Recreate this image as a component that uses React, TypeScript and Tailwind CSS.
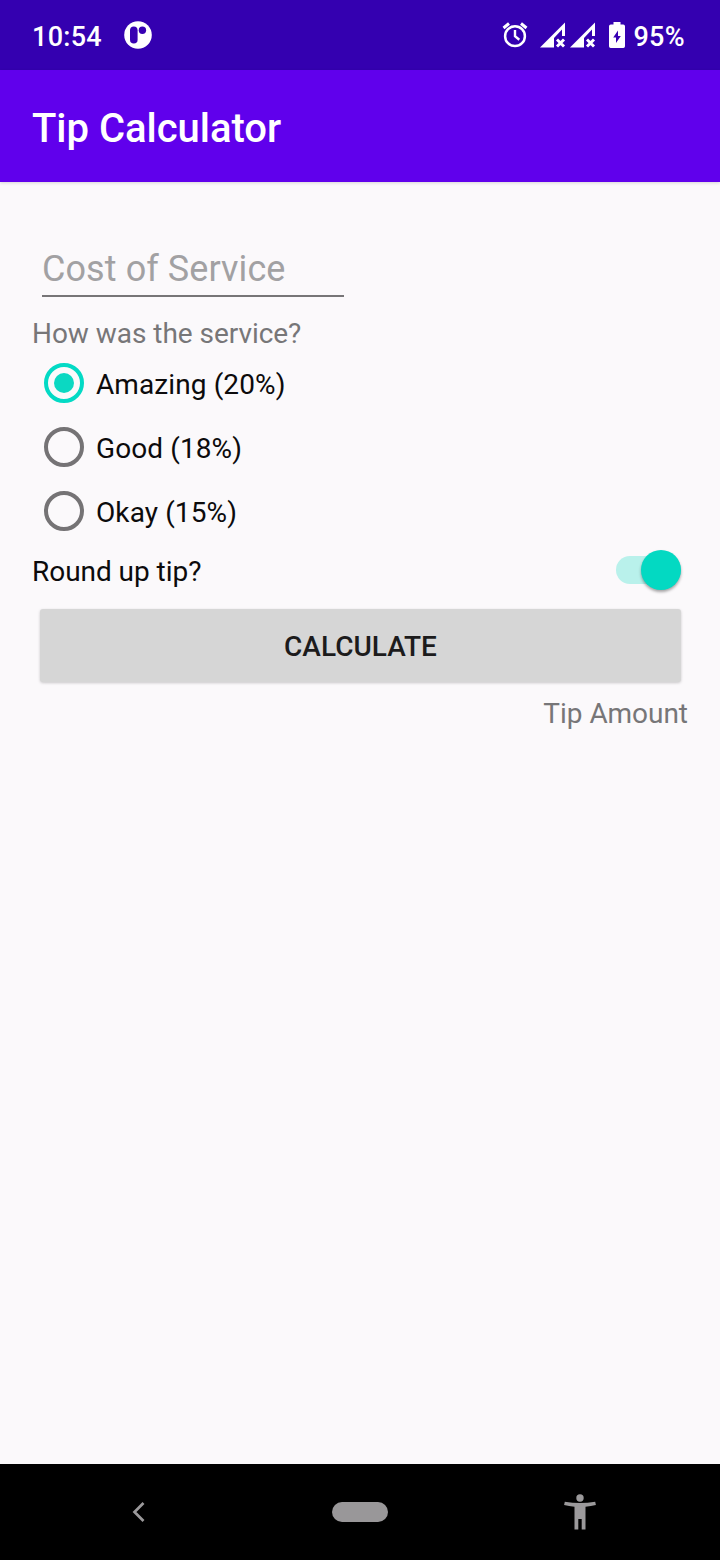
import { useState } from "react";

function NotificationIcon() {
  return (
    <svg className="block h-7 w-7" viewBox="0 0 28 28">
      <circle cx="14" cy="14" r="13.8" fill="#fff" />
      <rect x="6" y="5.5" width="7.6" height="17" rx="3.8" fill="#3700b3" />
      <circle cx="18.4" cy="9.2" r="3.7" fill="#3700b3" />
    </svg>
  );
}

function AlarmIcon() {
  return (
    <svg className="block h-[26px] w-[26px]" viewBox="0 0 26 26" fill="none" stroke="#fff">
      <circle cx="13" cy="14.2" r="9.9" strokeWidth="2.5" />
      <path d="M13 8v6.300l4.300 3.500" strokeWidth="2.400" />
      <path d="M1.500 6 7 1.500M24.500 6 19 1.500" strokeWidth="3" />
    </svg>
  );
}

function SignalIcon() {
  return (
    <svg className="block h-[26px] w-[26px]" viewBox="0 0 26 26">
      <path d="M0 25.500 25 .5v13.500h-3V7.500L14 16V25.500Z" fill="#fff" />
      <path d="m17 17.500 7 7m0-7-7 7" stroke="#fff" strokeWidth="2.900" />
    </svg>
  );
}

function BatteryIcon() {
  return (
    <svg className="block h-[26px] w-4" viewBox="0 0 16 26">
      <path d="M4.500 0h7v2.500h2.700Q16 2.500 16 4.300v20Q16 26 14.300 26H1.700Q0 26 0 24.300v-20Q0 2.500 1.800 2.500h2.700Z" fill="#fff" />
      <path d="M9 8.500 4.200 15.500H7V21l4.800-7H9Z" fill="#3700b3" />
    </svg>
  );
}

const options = ["Amazing (20%)", "Good (18%)", "Okay (15%)"];

export default function App() {
  const [selected, setSelected] = useState(0);
  const [roundUp, setRoundUp] = useState(true);

  return (
    <div className="flex h-[1560px] w-[720px] flex-col bg-[#fbf9fb] font-['Roboto',sans-serif] text-[28px] leading-[37px] tracking-[-0.04px]">
      <div className="flex h-[70px] shrink-0 items-center bg-[#3400b0] pb-px pl-8 pr-[35px] text-[27px] font-medium text-white">
        <span className="w-[92px] pt-[5px] tracking-[0.3px]">10:54</span>
        <NotificationIcon />
        <div className="ml-auto flex items-center pt-px">
          <AlarmIcon />
          <div className="ml-3 flex gap-1">
            <SignalIcon />
            <SignalIcon />
          </div>
          <div className="ml-[13px]">
            <BatteryIcon />
          </div>
          <span className="ml-2 pt-1 tracking-[0.35px]">95%</span>
        </div>
      </div>

      <header className="flex h-28 shrink-0 items-center bg-[#6000ec] px-8 pt-[6px] shadow-[0_1px_3px_rgba(0,0,0,0.15)]">
        <h1 className="text-[40px] font-medium leading-[52px] tracking-[-0.02px] text-white">Tip Calculator</h1>
      </header>

      <main className="flex flex-1 flex-col px-8">
        <input
          aria-label="Cost of Service"
          placeholder="Cost of Service"
          className="ml-[10px] mt-[62px] h-[53px] w-[302px] border-b-2 border-[#777577] bg-transparent pb-px text-[36px] tracking-[0.08px] text-black outline-none placeholder:text-[#a2a1a3]"
        />
        <p className="mt-[18px] text-[#777678]">How was the service?</p>

        <div className="-mt-px flex flex-col">
          {options.map((label, i) => (
            <button key={label} className="flex h-16 items-center pl-3" onClick={() => setSelected(i)}>
              <span
                className={
                  i === selected
                    ? "flex h-10 w-10 items-center justify-center rounded-full border-4 border-[#03dac5]"
                    : "flex h-10 w-10 items-center justify-center rounded-full border-4 border-[#757375]"
                }
              >
                {i === selected && <span className="h-5 w-5 rounded-full bg-[#0bd8c2]" />}
              </span>
              <span className="ml-3 pt-[2px] tracking-[0.1px] text-[#0c0b0c]">{label}</span>
            </button>
          ))}
        </div>

        <div className="flex h-[54px] items-center justify-between pr-[7px]">
          <span className="pt-[3px] text-[#0c0b0c]">Round up tip?</span>
          <button
            role="switch"
            aria-checked={roundUp}
            aria-label="Round up tip?"
            onClick={() => setRoundUp(!roundUp)}
            className={
              roundUp
                ? "flex h-7 w-[65px] items-center justify-end rounded-full bg-[#b9f1eb]"
                : "flex h-7 w-[65px] items-center justify-start rounded-full bg-[#b2b2b2]"
            }
          >
            <span
              className={
                roundUp
                  ? "h-10 w-10 rounded-full bg-[#03d9c2] shadow-[0_2px_3px_rgba(0,0,0,0.35)]"
                  : "h-10 w-10 rounded-full bg-[#ececec] shadow-[0_2px_3px_rgba(0,0,0,0.35)]"
              }
            />
          </button>
        </div>

        <button className="ml-2 mr-[7px] mt-3 h-[73px] rounded-[3px] bg-[#d6d6d6] pt-[2px] font-medium tracking-normal text-[#1c1b1c] shadow-[0_1px_3px_rgba(0,0,0,0.2)]">
          CALCULATE
        </button>
        <p className="mt-[13px] text-right text-[#777678]">Tip Amount</p>
      </main>

      <nav className="grid h-24 shrink-0 grid-cols-[278px_164px_276px] items-center justify-items-center bg-black">
        <svg className="block h-6 w-6" viewBox="0 0 24 24" fill="none" stroke="#9b999b" strokeWidth="2.700">
          <path d="M16.500 3 7.500 12l9 9" />
        </svg>
        <div className="h-5 w-14 rounded-full bg-[#999799]" />
        <svg className="block h-9 w-8" viewBox="0 0 32 36" fill="#9b999b">
          <circle cx="16" cy="4" r="3.700" />
          <path d="M.8 7.700Q16 10.500 31.200 7.700l.7 3.300Q27 12.200 21.500 12.700V35.500H17.700V25h-3.400v10.500h-3.800V12.700Q5 12.200.1 11Z" />
        </svg>
      </nav>
    </div>
  );
}
